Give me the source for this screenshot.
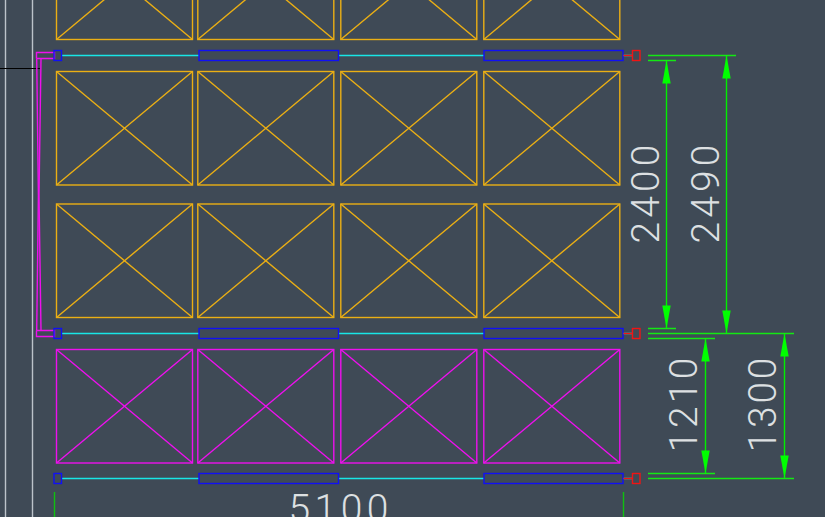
const cols = [56.5, 197.8, 340.8, 483.8];
const W = 136;
const H = 113.5;
const Y = "#ebaf14";
const M = "#ee10ee";
const G = "#00f000";
const SW = 1.4;

function Cell({ x, y, c }: { x: number; y: number; c: string }) {
  return (
    <g stroke={c} fill="none" strokeWidth={SW}>
      <rect x={x} y={y} width={W} height={H} />
      <line x1={x} y1={y} x2={x + W} y2={y + H} />
      <line x1={x} y1={y + H} x2={x + W} y2={y} />
    </g>
  );
}

function Beam({ y }: { y: number }) {
  return (
    <g fill="none" strokeWidth={SW}>
      <line x1={61} y1={y} x2={632} y2={y} stroke="#18e6e6" />
      <rect x={54} y={y - 5} width={7.5} height={10} stroke="#1010f5" />
      <rect x={199} y={y - 5} width={139.5} height={10} stroke="#1010f5" fill="#3f4a56" />
      <rect x={484} y={y - 5} width={139} height={10} stroke="#1010f5" fill="#3f4a56" />
      <line x1={623.5} y1={y} x2={632} y2={y} stroke="#f01414" />
      <rect x={632.5} y={y - 5} width={7.5} height={10} stroke="#f01414" />
    </g>
  );
}

function Arrow({ x, y, dir }: { x: number; y: number; dir: 1 | -1 }) {
  const b = y + dir * 23;
  return <polygon points={`${x},${y} ${x - 4.2},${b} ${x + 4.2},${b}`} fill="#00ff00" />;
}

function Dim({ x, y, len, t }: { x: number; y: number; len: number; t: string }) {
  return (
    <text
      transform={`translate(${x} ${y}) rotate(-90)`}
      textLength={len}
      lengthAdjust="spacing"
      className="fill-[#dde0e2] font-['Roboto'] text-[39px] font-light"
    >
      {t}
    </text>
  );
}

export default function App() {
  return (
    <div className="h-[517px] w-[825px] overflow-hidden bg-[#3f4a56]">
      <svg width={825} height={517} viewBox="0 0 825 517" className="block">
        <line x1={5.5} y1={0} x2={5.5} y2={517} stroke="#bcc3ca" strokeWidth={SW} />
        <line x1={32.5} y1={0} x2={32.5} y2={517} stroke="#bcc3ca" strokeWidth={SW} />
        <line x1={0} y1={68.5} x2={40} y2={68.5} stroke="#000000" />

        {cols.map((x) => (
          <g key={x}>
            <Cell x={x} y={-74} c={Y} />
            <Cell x={x} y={71.5} c={Y} />
            <Cell x={x} y={204} c={Y} />
            <Cell x={x} y={349.5} c={M} />
          </g>
        ))}

        <g fill="none" stroke={M} strokeWidth={SW}>
          <path d="M36.5 58.5V52.5H54.5V58.5H36.5" />
          <path d="M36.5 330.5V336.5H54.5V330.5H36.5" />
          <path d="M36.7 58.5L38.4 195L36.7 330.5" />
          <path d="M41 58.5L39 195L41 330.5" />
        </g>

        <Beam y={55.5} />
        <Beam y={333.5} />
        <Beam y={478.5} />

        <g stroke="#14e814" fill="none" strokeWidth={SW}>
          <path d="M648 55.5H736M648 60.5H676M648 328.5H676M648 333.5H794M648 338.5H715M648 473.5H715M648 478.5H794" />
        </g>
        <g stroke={G} fill="none" strokeWidth={SW}>
          <path d="M666.5 61V328M726.5 56V333M705.5 339V473M784.5 334V478" />
        </g>
        <Arrow x={666.5} y={60.5} dir={1} />
        <Arrow x={666.5} y={328.5} dir={-1} />
        <Arrow x={726.5} y={55.5} dir={1} />
        <Arrow x={726.5} y={333.5} dir={-1} />
        <Arrow x={705.5} y={338.5} dir={1} />
        <Arrow x={705.5} y={473.5} dir={-1} />
        <Arrow x={784.5} y={333.5} dir={1} />
        <Arrow x={784.5} y={478.5} dir={-1} />

        <path d="M54.5 492V517M623.5 492V517" stroke="#10c010" fill="none" strokeWidth={SW} />

        <Dim x={659} y={243.5} len={99} t="2400" />
        <Dim x={719} y={243.5} len={99} t="2490" />
        <Dim x={697} y={452.5} len={95} t="1210" />
        <Dim x={776} y={452.5} len={95} t="1300" />
        <text
          x={288.5}
          y={522}
          textLength={100}
          lengthAdjust="spacing"
          className="fill-[#dde0e2] font-['Roboto'] text-[39px] font-light"
        >
          5100
        </text>
      </svg>
    </div>
  );
}
